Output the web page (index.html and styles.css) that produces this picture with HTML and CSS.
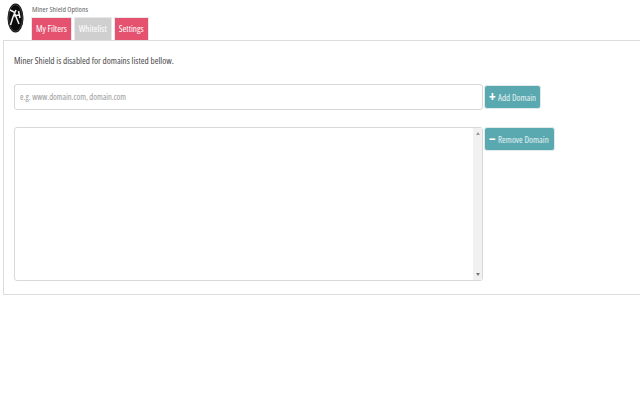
FILE: index.html
```html
<!DOCTYPE html>
<html lang="en">
<head>
    <meta charset="UTF-8">
    <title>Miner Shield Options</title>
    <link rel="stylesheet" href="styles.css">
</head>
<body>
    <div class="header">
        <svg class="logo" width="17" height="30" viewBox="0 0 17 30">
            <ellipse cx="8.5" cy="15" rx="8" ry="14.5" fill="#0c0c0c"/>
            <ellipse cx="8.5" cy="15" rx="6.9" ry="13.3" fill="none" stroke="#8a8a8a" stroke-width="0.4"/>
            <path d="M3 7 L7 9 L12 21 M9 7 L6 14 L3.5 22 M6.5 13 L12 12 M11.5 8 L13 15" fill="none" stroke="#f0f0f0" stroke-width="1.5"/>
        </svg>
        <div class="header-right">
            <div class="title">Miner Shield Options</div>
            <div class="tabs">
                <a class="tab">My Filters</a>
                <a class="tab active">Whitelist</a>
                <a class="tab">Settings</a>
            </div>
        </div>
    </div>

    <div class="panel">
        <p class="intro">Miner Shield is disabled for domains listed bellow.</p>

        <div class="row add-row">
            <input class="domain-input" type="text" placeholder="e.g. www.domain.com, domain.com">
            <button class="btn add-btn"><span class="sign">+</span>Add Domain</button>
        </div>

        <div class="row list-row">
            <div class="domain-list">
                <div class="list-body"></div>
                <div class="scrollbar">
                    <span class="arrow up"></span>
                    <span class="arrow down"></span>
                </div>
            </div>
            <button class="btn remove-btn"><span class="sign">&minus;</span>Remove Domain</button>
        </div>
    </div>
</body>
</html>
```

FILE: styles.css
```css
* {
    box-sizing: border-box;
    margin: 0;
    padding: 0;
    font-family: 'Open Sans', 'Liberation Sans', sans-serif;
    font-stretch: 75%;
}

body {
    background-color: white;
    overflow: hidden;
    width: 640px;
    height: 400px;
}

.header {
    display: flex;
    height: 40px;
    padding: 3px 0 0 7px;
}

.logo {
    flex: none;
}

.header-right {
    margin-left: 7px;
}

.title {
    color: #666;
    font-size: 7.7px;
    line-height: 10px;
    margin-top: 1px;
    padding-left: 1px;
}

.tabs {
    display: flex;
    gap: 2px;
    margin-top: 3px;
}

.tab {
    display: block;
    height: 23px;
    padding: 0 4px;
    line-height: 22px;
    font-size: 9.2px;
    color: white;
    background-color: #e4526f;
    border: 1px solid #e8e8e8;
    border-bottom: none;
}

.tab.active {
    background-color: #cfcfcf;
}

.panel {
    height: 255px;
    margin-left: 3px;
    padding: 14px 0 0 10px;
    border: 1px solid #dcdcdc;
    border-right: none;
}

.intro {
    font-size: 9.2px;
    line-height: 12px;
    color: #4a4a4a;
}

.row {
    display: flex;
    gap: 1px;
}

.add-row {
    align-items: center;
    margin-top: 17px;
}

.list-row {
    align-items: flex-start;
    margin-top: 17px;
}

.domain-input {
    width: 469px;
    height: 26px;
    padding: 0 5px 1px;
    font-size: 8.5px;
    border: 1px solid #d8d8d8;
    border-radius: 3px;
    outline: none;
}

.domain-input::placeholder {
    color: #999;
}

.domain-list {
    display: flex;
    width: 469px;
    height: 154px;
    border: 1px solid #d8d8d8;
    border-radius: 3px;
}

.list-body {
    flex: 1;
}

.scrollbar {
    display: flex;
    flex-direction: column;
    justify-content: space-between;
    align-items: center;
    width: 9px;
    padding: 4px 0;
    background-color: #f1f1f1;
}

.arrow {
    width: 0;
    height: 0;
    border-left: 2px solid transparent;
    border-right: 2px solid transparent;
}

.arrow.up {
    border-bottom: 3px solid #999;
}

.arrow.down {
    border-top: 3px solid #777;
}

.btn {
    display: flex;
    align-items: center;
    height: 24px;
    padding: 0 4px;
    font-size: 9px;
    color: #e6f2f3;
    background-color: #5aa9b1;
    border: 1px solid #e0eaeb;
    border-radius: 3px;
}

.remove-btn {
    padding-right: 5px;
}

.sign {
    width: 6px;
    margin-right: 3px;
    text-align: center;
    font-size: 14px;
    font-weight: bold;
    line-height: 12px;
    color: white;
}
```
